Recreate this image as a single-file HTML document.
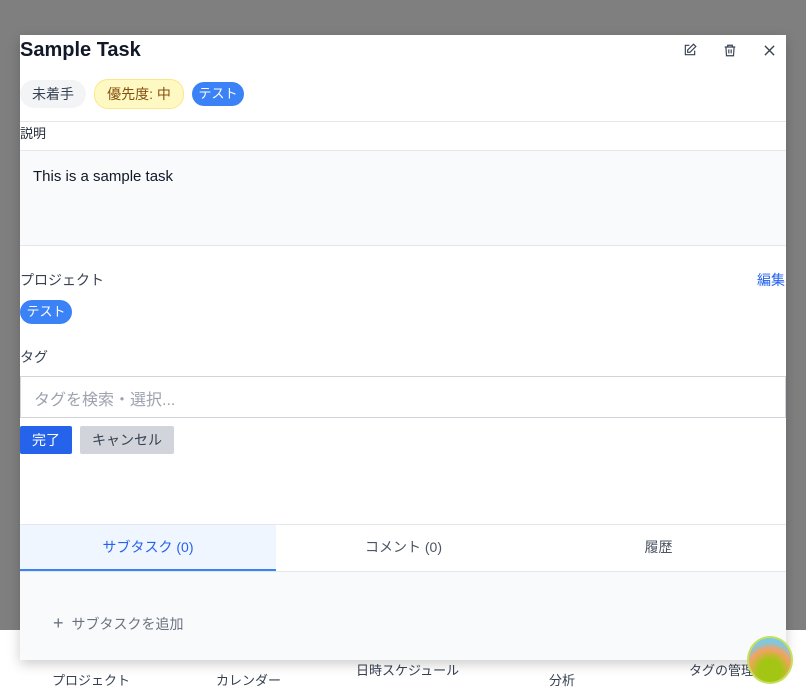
<!DOCTYPE html>
<html><head><meta charset="utf-8"><style>
*{box-sizing:border-box;margin:0;padding:0}
body{width:806px;height:695px;overflow:hidden;background:#7f7f7f;font-family:"Liberation Sans","Noto Sans CJK JP",sans-serif;position:relative;color:#1f2937}
.nav{position:absolute;left:0;top:630px;width:806px;height:65px;background:#fff}
.nav span{position:absolute;font-size:13px;color:#374151}
.modal{position:absolute;left:20px;top:35px;width:766px;height:625px;background:#fff;box-shadow:0 4px 12px rgba(0,0,0,.2)}
.abs{position:absolute}
.pill{position:absolute;height:28px;border-radius:14px;font-size:14px;line-height:28px;padding:0 11px}
</style></head><body>
<div class="nav">
<span style="left:52px;top:40px">プロジェクト</span>
<span style="left:216px;top:40px">カレンダー</span>
<span style="left:356px;top:30px">日時スケジュール</span>
<span style="left:549px;top:40px">分析</span>
<span style="left:689px;top:30px">タグの管理</span>
</div>
<div class="modal">
<div class="abs" style="left:0;top:4px;font-size:20px;font-weight:bold;color:#111827">Sample Task</div>
<svg class="abs" style="left:663px;top:8px" width="14" height="14" viewBox="0 0 24 24" fill="none" stroke="#374151" stroke-width="2"><path d="M11 4H4v16h16v-7"/><path d="M18 2l4 4-10 10H8v-4z"/></svg>
<svg class="abs" style="left:703px;top:8px" width="14" height="15" viewBox="0 0 24 24" fill="none" stroke="#374151" stroke-width="2"><path d="M3 6h18M8 6V3h8v3M5 6l1 15h12l1-15M10 10v7M14 10v7"/></svg>
<svg class="abs" style="left:744px;top:10px" width="11" height="11" viewBox="0 0 12 12" stroke="#374151" stroke-width="1.5"><path d="M1 1l10 10M11 1L1 11"/></svg>
<div class="pill" style="left:0;top:45px;width:66px;text-align:center;padding:0;background:#f3f4f6;color:#374151">未着手</div>
<div class="pill" style="left:74px;top:44px;height:30px;width:90px;text-align:center;padding:0;background:#fef9c3;border:1px solid #fde68a;color:#854d0e">優先度: 中</div>
<div class="pill" style="left:172px;top:47px;height:24px;width:52px;text-align:center;line-height:24px;padding:0;font-size:13px;background:#3b82f6;color:#fff">テスト</div>
<div class="abs" style="left:0;top:86px;width:766px;border-top:1px solid #e5e7eb"></div>
<div class="abs" style="left:0;top:88px;font-size:13px;color:#1f2937">説明</div>
<div class="abs" style="left:0;top:115px;width:766px;height:96px;background:#f9fafb;border-top:1px solid #e5e7eb;border-bottom:1px solid #e5e7eb"></div>
<div class="abs" style="left:13px;top:133px;font-size:15px;color:#111827">This is a sample task</div>
<div class="abs" style="left:0;top:235px;font-size:14px;color:#374151">プロジェクト</div>
<div class="abs" style="left:737px;top:235px;font-size:14px;color:#2563eb">編集</div>
<div class="pill" style="left:0;top:265px;height:24px;width:52px;text-align:center;line-height:24px;padding:0;font-size:13px;background:#3b82f6;color:#fff">テスト</div>
<div class="abs" style="left:0;top:312px;font-size:14px;color:#374151">タグ</div>
<div class="abs" style="left:0;top:341px;width:766px;height:42px;border:1px solid #d1d5db;font-size:16px;color:#9ca3af;padding:9px 13px">タグを検索・選択...</div>
<div class="abs" style="left:0;top:391px;width:52px;height:28px;background:#2563eb;color:#fff;font-size:14px;line-height:28px;text-align:center;border-radius:2px">完了</div>
<div class="abs" style="left:60px;top:391px;width:94px;height:28px;background:#d1d5db;color:#374151;font-size:14px;line-height:28px;text-align:center;border-radius:2px">キャンセル</div>
<div class="abs" style="left:0;top:489px;width:766px;height:48px;border-top:1px solid #e5e7eb;border-bottom:1px solid #e5e7eb"></div>
<div class="abs" style="left:0;top:490px;width:256px;height:46px;background:#eff6ff;border-bottom:2px solid #3b82f6;color:#2563eb;font-size:14px;line-height:44px;text-align:center">サブタスク (0)</div>
<div class="abs" style="left:256px;top:490px;width:255px;height:46px;color:#4b5563;font-size:14px;line-height:44px;text-align:center">コメント (0)</div>
<div class="abs" style="left:511px;top:490px;width:255px;height:46px;color:#4b5563;font-size:14px;line-height:44px;text-align:center">履歴</div>
<div class="abs" style="left:0;top:537px;width:766px;height:88px;background:#f9fafb"></div>
<div class="abs" style="left:33px;top:578px;font-size:14px;color:#6b7280"><span style="font-size:18px;margin-right:8px">+</span>サブタスクを追加</div>
</div>
<div class="abs" style="left:747px;top:636px;width:46px;height:48px;border-radius:50%;background:radial-gradient(circle at 50% 75%,#a3c614 30%,#f4a261 55%,#7ec8e3 75%);border:2px solid #c5e05a"></div>
</body></html>
